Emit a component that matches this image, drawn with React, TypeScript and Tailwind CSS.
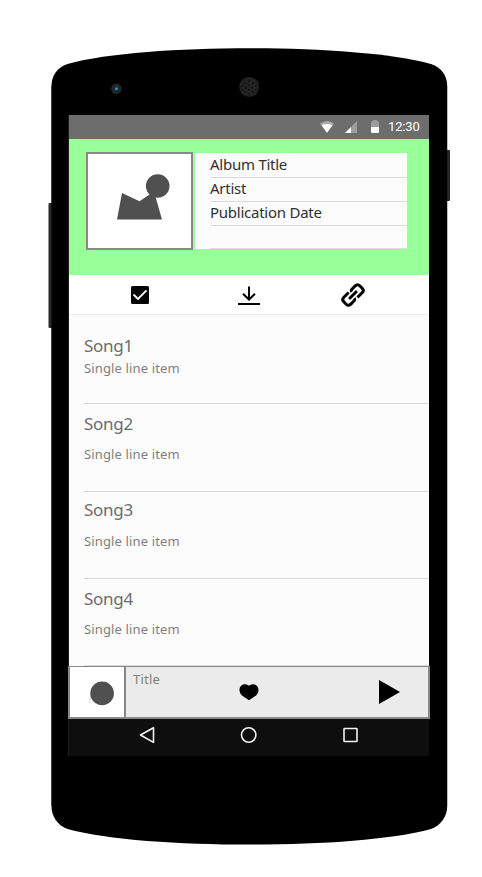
import React from "react";

const songs = [
  { name: "Song1", row: "h-[89px] pt-[19px]", gap: "-mt-px" },
  { name: "Song2", row: "h-[88px] pt-[8px]", gap: "mt-[7px]" },
  { name: "Song3", row: "h-[87px] pt-[6px]", gap: "mt-[8px]" },
  { name: "Song4", row: "h-[87px] pt-[8px]", gap: "mt-[7px]" },
];

const details = ["Album Title", "Artist", "Publication Date"];

const speakerDots = [
  [249, 81], [245, 83], [253, 83], [249, 85], [242, 86], [256, 86], [246, 88], [252, 88],
  [249, 89.5], [242, 90], [256, 90], [245, 92], [253, 92], [249, 94],
];

function PhoneBody() {
  return (
    <svg className="absolute inset-0" width="482" height="877" viewBox="0 0 482 877">
      <rect x="48.5" y="203" width="5" height="125" rx="1" fill="#292929" />
      <rect x="445" y="150" width="5" height="51" rx="1" fill="#292929" />
      <path d="M51.5 86C51.5 76 57 67.500 67.500 64C107 53 180 48.300 249.200 48.300C318 48.300 391 53 431 64C441.500 67.500 447.200 76 447.200 86V806C447.200 816 441.500 825 431 829C391 840 318 844.600 249.200 844.600C180 844.600 107 840 67.500 829C57 825 51.500 816 51.500 806Z" fill="#000" />
      <path d="M51.700 86V203M51.700 328V806" stroke="#222" strokeWidth=".8" />
      <path d="M447.500 86V150M447.500 201V806" stroke="#bbb" strokeWidth=".8" />
      <path d="M68.500 115V756" stroke="#1c1c1c" />
      <circle cx="116.400" cy="88.700" r="5.300" fill="#262626" />
      <circle cx="116.400" cy="88.700" r="1.500" fill="#119cdb" />
      <circle cx="249.200" cy="86.900" r="10" fill="#222" />
      {speakerDots.map(([x, y]) => (
        <circle key={`${x}-${y}`} cx={x} cy={y} r=".8" fill="#080808" />
      ))}
    </svg>
  );
}

function StatusBar() {
  return (
    <div className="flex h-6 items-center bg-[#6d6d6d]">
      <svg width="318" height="24" viewBox="0 0 318 24">
        <path d="M251 8.500Q258 3.500 265 8.500L258 17.800Z" fill="#aaa" />
        <path d="M252.500 10.300Q258 7.500 263.500 10.300L258 17.800Z" fill="#fff" />
        <path d="M276 18L288 6V18Z" fill="#9e9e9e" />
        <path d="M276 18L282 12V18Z" fill="#fff" />
        <path d="M302 12V8Q302 6.500 303.500 6.200L304.500 5H307.500L308.500 6.200Q310 6.500 310 8V12Z" fill="#9e9e9e" />
        <path d="M302 12H310V16.500Q310 18 308.500 18H303.500Q302 18 302 16.500Z" fill="#fff" />
      </svg>
      <span className="ml-[1px] font-['Roboto',sans-serif] text-[13px] leading-6 tracking-[-0.15px] text-white">12:30</span>
    </div>
  );
}

function AlbumHeader() {
  return (
    <header className="flex h-[136px] bg-[#99ff99] pl-[17px] pt-[13px]">
      <div className="h-[98px] w-[107px] border-2 border-[#888] bg-white">
        <svg width="103" height="94" viewBox="88 154 103 94">
          <circle cx="157.700" cy="186" r="11.800" fill="#505050" />
          <path d="M122 193L139.500 201.300L154 191.500L162 219.500H117Z" fill="#505050" />
        </svg>
      </div>
      <div className="ml-[2px] mt-[1px] h-[96px] w-[212px] bg-[#fcfcfc] pl-[15px] text-[15px] tracking-[-0.25px] text-[#303030]">
        {details.map((item) => (
          <div key={item} className="h-6 whitespace-nowrap leading-[23px] shadow-[0_1px_0_#d9d9d9]">
            {item}
          </div>
        ))}
        <div className="h-6 border-b border-[#dedede]" />
      </div>
    </header>
  );
}

function Toolbar() {
  return (
    <div className="h-10 border-b border-[#eee] bg-white">
      <svg width="360" height="39" viewBox="69 275 360 39">
        <rect x="131" y="286" width="18" height="18" rx="1.500" />
        <path d="M133.500 294.500L138 299L146.500 290.300" stroke="#fff" strokeWidth="1.800" fill="none" />
        <path d="M249 286.500V300M243 293.800L249 299.500L255 293.800" stroke="#000" strokeWidth="2" fill="none" />
        <path d="M238 304H260" stroke="#000" strokeWidth="2" />
        <g transform="translate(353 295) rotate(-45)" fill="none" stroke="#000" strokeWidth="3">
          <path d="M-1.300 -4.900H-8Q-11.300 -4.900 -11.300 -1.800V1.800Q-11.300 4.900 -8 4.900H-4Q-1.500 4.900 -1.300 3.200M1.300 4.900H8Q11.300 4.900 11.300 1.800V-1.800Q11.300 -4.900 8 -4.900H4Q1.500 -4.900 1.300 -3.200" />
          <path d="M-4.300 0H4.300" strokeLinecap="round" />
        </g>
      </svg>
    </div>
  );
}

function SongList() {
  return (
    <main className="h-[351px] pl-[15px]">
      {songs.map((song) => (
        <div key={song.name} className={`border-b border-[#d9d9d9] ${song.row}`}>
          <div className="text-[17px] leading-6 tracking-[-0.3px] text-[#6c6c6c]">{song.name}</div>
          <div className={`text-[13px] leading-[22px] tracking-[0.14px] text-[#808080] ${song.gap}`}>Single line item</div>
        </div>
      ))}
    </main>
  );
}

function Player() {
  return (
    <div className="-ml-[1px] flex h-[53px] w-[362px] border-x-2 border-b-2 border-t border-[#888] bg-[#ebebeb]">
      <div className="w-[56px] border-r-2 border-[#888] bg-white">
        <svg width="54" height="50" viewBox="70 667 54 50">
          <path d="M88 705L91 700V696Z" fill="#ddd" />
          <circle cx="102.100" cy="693.400" r="11.800" fill="#505050" />
        </svg>
      </div>
      <div className="w-[90px] pl-[7px] text-[13px] leading-[24px] tracking-[0.2px] text-[#808080]">Title</div>
      <svg width="212" height="50" viewBox="216 667 212 50">
        <path d="M249 700.300L242 695.500C237.500 691 239.500 684.200 245 684.200Q247.700 684.200 249 685.800Q250.300 684.200 253 684.200C258.500 684.200 260.500 691 256 695.500Z" />
        <path d="M379 680V704L400 692Z" />
      </svg>
    </div>
  );
}

function NavigationBar() {
  return (
    <div className="h-[37px] bg-[#0e0e0e]">
      <svg width="360" height="37" viewBox="69 719 360 37" fill="none" stroke="#f2f2f2" strokeWidth="1.600" strokeLinejoin="round">
        <path d="M140.500 735L153.500 727.700V742.400Z" />
        <circle cx="248.700" cy="735" r="7.200" />
        <rect x="344" y="728.500" width="13" height="13" rx=".6" />
      </svg>
    </div>
  );
}

export default function App() {
  return (
    <div className="relative h-[877px] w-[482px] overflow-hidden bg-white pl-[69px] pt-[115px] font-['Noto_Sans',sans-serif]">
      <PhoneBody />
      <div className="relative h-[641px] w-[360px] bg-[#fcfcfc] [&_svg]:block">
        <StatusBar />
        <AlbumHeader />
        <Toolbar />
        <SongList />
        <Player />
        <NavigationBar />
      </div>
    </div>
  );
}
